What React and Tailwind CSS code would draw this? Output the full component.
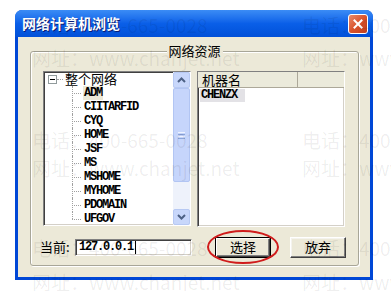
import React from 'react'

const CJK = { fontFamily: '"Noto Sans CJK SC", "Noto Sans", sans-serif' }
const MONO = { fontFamily: '"Liberation Mono", "Noto Sans CJK SC", monospace' }

const hosts = ['ADM', 'CIITARFID', 'CYQ', 'HOME', 'JSF', 'MS', 'MSHOME', 'MYHOME', 'PDOMAIN', 'UFGOV']

const sunken =
  'border border-t-[#808080] border-l-[#808080] border-b-white border-r-white shadow-[inset_1px_1px_0_#404040,inset_-1px_-1px_0_#d4d0c8]'

function Watermarks() {
  const rows = [
    { y: 12, t: '电话：400-665-0028' },
    { y: 45, t: '网址：www.chanjet.net' },
    { y: 127, t: '电话：400-665-0028' },
    { y: 155, t: '网址：www.chanjet.net' },
    { y: 235, t: '电话：400-665-0028' },
    { y: 269, t: '网址：www.chanjet.net' },
  ]
  return (
    <div className="pointer-events-none absolute inset-0 overflow-hidden">
      {rows.map((r, i) => (
        <React.Fragment key={i}>
          <div className="absolute left-[32px] whitespace-nowrap text-[19px] leading-[26px] text-black/[0.07]" style={{ ...CJK, top: r.y }}>
            {r.t}
          </div>
          <div className="absolute left-[302px] whitespace-nowrap text-[19px] leading-[26px] text-black/[0.07]" style={{ ...CJK, top: r.y }}>
            {r.t}
          </div>
        </React.Fragment>
      ))}
    </div>
  )
}

function ScrollBar() {
  return (
    <div className="flex w-[17px] flex-col bg-[#eef2fb]">
      <div className="flex h-[16px] items-center justify-center rounded-[2px] border border-[#b7c9f3] bg-[#c8d7fb]">
        <svg width="9" height="6" viewBox="0 0 9 6">
          <path d="M1 5 L4.5 1.5 L8 5" fill="none" stroke="#4d6185" strokeWidth="2" />
        </svg>
      </div>
      <div className="flex h-[94px] items-center justify-center rounded-[2px] border border-[#b2c5f3] bg-[#c6d5fb]">
        <div className="flex flex-col gap-[1px]">
          <div className="h-[1px] w-[7px] bg-[#eef3ff]" />
          <div className="h-[1px] w-[7px] bg-[#8ca5d9]" />
          <div className="h-[1px] w-[7px] bg-[#eef3ff]" />
          <div className="h-[1px] w-[7px] bg-[#8ca5d9]" />
        </div>
      </div>
      <div className="flex-1" />
      <div className="flex h-[16px] items-center justify-center rounded-[2px] border border-[#b7c9f3] bg-[#c8d7fb]">
        <svg width="9" height="6" viewBox="0 0 9 6">
          <path d="M1 1 L4.5 4.5 L8 1" fill="none" stroke="#4d6185" strokeWidth="2" />
        </svg>
      </div>
    </div>
  )
}

function Tree() {
  return (
    <div className={`flex h-[155px] w-[148px] bg-white ${sunken}`}>
      <div className="flex-1 overflow-hidden pl-[4px]">
        <div className="flex h-[14px] items-center">
          <div className="flex h-[9px] w-[9px] items-center justify-center border border-[#919b9c] bg-white">
            <div className="h-[1px] w-[5px] bg-black" />
          </div>
          <div className="w-[6px] border-b border-dotted border-[#a0a0a0]" />
          <span className="ml-[2px] text-[13px] leading-[14px] text-black" style={CJK}>整个网络</span>
        </div>
        {hosts.map((h, i) => (
          <div key={h} className="flex h-[14px] items-stretch">
            <div className="w-[24px]" />
            <div className="relative w-[10px]">
              <div
                className={`absolute left-0 top-0 border-l border-dotted border-[#a0a0a0] ${i === hosts.length - 1 ? 'h-[7px]' : 'h-[14px]'}`}
              />
              <div className="absolute left-0 top-[7px] w-[9px] border-t border-dotted border-[#a0a0a0]" />
            </div>
            <span
              className={`ml-[1px] px-[1px] text-[12px] font-bold leading-[14px] tracking-[-1.2px] text-black ${i === 0 ? 'bg-[#ece9d8]' : ''}`}
              style={MONO}
            >
              {h}
            </span>
          </div>
        ))}
      </div>
      <ScrollBar />
    </div>
  )
}

function ListView() {
  return (
    <div className={`flex h-[156px] w-[148px] flex-col bg-white ${sunken}`}>
      <div className="flex h-[16px] border-b border-[#aca899] bg-[#ebeadb]">
        <div className="flex w-[100px] items-center border-r border-[#aca899] pl-[4px] text-[13px] text-black" style={CJK}>
          机器名
        </div>
        <div className="flex-1" />
      </div>
      <div className="flex pl-[2px] pt-[1px]">
        <span className="bg-[#e3e2e6] pl-[1px] pr-[8px] text-[12px] font-bold leading-[13px] tracking-[-1.2px] text-black" style={MONO}>
          CHENZX
        </span>
      </div>
    </div>
  )
}

function Button({ label, focused }) {
  return (
    <div className={`h-[21px] w-[56px] ${focused ? 'border border-black' : ''}`}>
      <div
        className={`flex h-full w-full items-center justify-center border border-t-white border-l-white border-b-[#404040] border-r-[#404040] bg-[#ece9d8] text-[13px] text-black ${
          focused ? 'shadow-[inset_-1px_-1px_0_#808080]' : 'shadow-[inset_-1px_-1px_0_#808080,inset_1px_1px_0_#f4f3ee]'
        }`}
        style={CJK}
      >
        {label}
      </div>
    </div>
  )
}

export default function App() {
  return (
    <div className="relative h-[291px] w-[391px] overflow-hidden bg-white pl-[15px] pt-[10px]">
      <div className="flex h-[270px] w-[358px] flex-col rounded-t-[7px] bg-[#0047d6]">
        <div className="relative flex h-[27px] items-center rounded-t-[7px] bg-gradient-to-b from-[#3b8cf5] via-[#0a5fe8] to-[#0150d8] pl-[7px]">
          <span className="text-[14px] font-bold text-white [text-shadow:1px_1px_0_#0a1e7a]" style={CJK}>
            网络计算机浏览
          </span>
          <div className="absolute right-[5px] top-[4px] flex h-[20px] w-[20px] items-center justify-center rounded-[3px] border border-white bg-gradient-to-br from-[#e88a6a] via-[#d9532c] to-[#c1401f]">
            <svg width="10" height="10" viewBox="0 0 10 10">
              <path d="M1.5 1.5 L8.5 8.5 M8.5 1.5 L1.5 8.5" stroke="white" strokeWidth="2" strokeLinecap="square" />
            </svg>
          </div>
        </div>
        <div className="mx-[3px] mb-[3px] flex-1 bg-[#ece9d8] px-[12px] pt-[14px]">
          <div className="relative h-[215px] w-[329px] rounded-[3px] border border-[#a8a698] pl-[12px] pt-[19px] shadow-[inset_1px_1px_0_white,1px_1px_0_white]">
            <div className="absolute left-1/2 top-[-9px] -translate-x-1/2 bg-[#ece9d8] px-[2px] text-[13px] leading-[16px] text-black" style={CJK}>
              网络资源
            </div>
            <div className="flex gap-[6px]">
              <Tree />
              <ListView />
            </div>
            <div className="-ml-[3px] mt-[9px] flex h-[22px] items-center">
              <span className="w-[33px] text-[13px] text-black" style={CJK}>当前:</span>
              <div className={`ml-[2px] flex h-[17px] w-[117px] items-center bg-white pl-[3px] ${sunken}`}>
                <span className="text-[12px] font-bold leading-[14px] tracking-[-1.2px] text-black" style={MONO}>127.0.0.1</span>
                <div className="ml-[2px] h-[13px] w-[1px] bg-black" />
              </div>
              <div className="ml-[23px]">
                <Button label="选择" focused />
              </div>
              <div className="ml-[19px]">
                <Button label="放弃" />
              </div>
            </div>
          </div>
        </div>
      </div>
      <svg className="pointer-events-none absolute left-[205px] top-[228px]" width="76" height="38" viewBox="0 0 76 38">
        <ellipse cx="38" cy="19" rx="35" ry="16" fill="none" stroke="#d01c1c" strokeWidth="2" />
      </svg>
      <Watermarks />
    </div>
  )
}
